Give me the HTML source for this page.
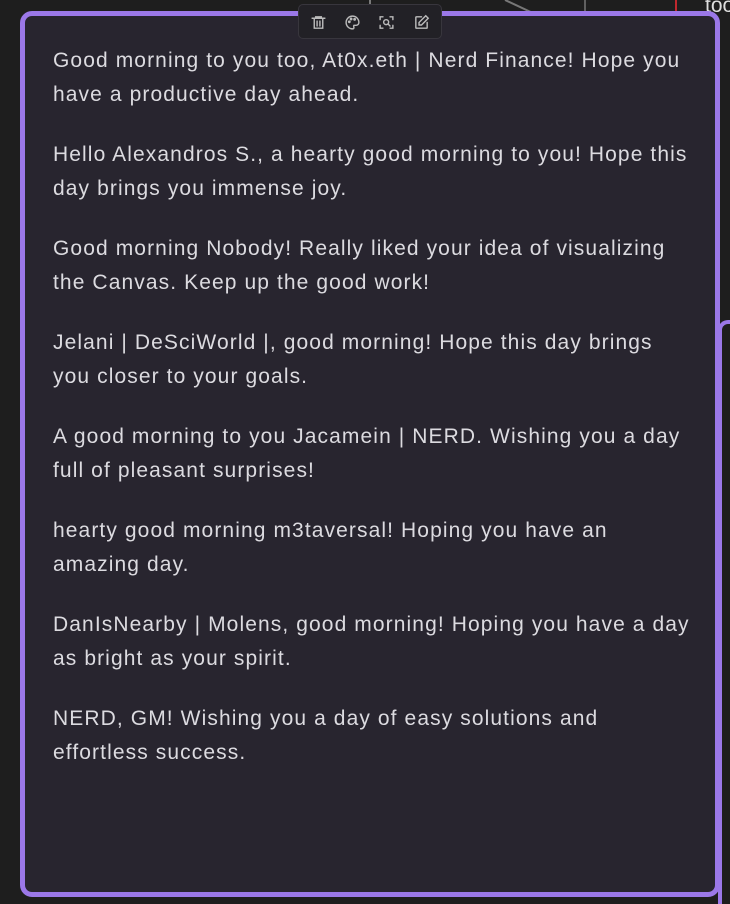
<!DOCTYPE html>
<html><head><meta charset="utf-8"><style>
html,body{margin:0;padding:0;width:730px;height:900px;overflow:hidden;background:#1e1e1e;font-family:"Liberation Sans",sans-serif;}
.card{position:absolute;left:20px;top:11px;width:690px;height:876px;border:5px solid #9b78e8;border-radius:12px;background:#28252f;}
.txt{position:absolute;left:53px;top:44px;width:670px;color:#dcdbe0;font-size:21px;line-height:34px;letter-spacing:1.1px;white-space:nowrap;}
.txt p{margin:0 0 26px 0;}
.tb{position:absolute;left:298px;top:4px;width:144px;height:35px;background:#222126;border:1px solid #38363d;border-radius:5px;box-sizing:border-box;}
.tb svg{position:absolute;top:9px;width:17px;height:17px;}
</style></head><body>
<svg style="position:absolute;left:0;top:0" width="730" height="60">
<line x1="505" y1="0" x2="535" y2="14" stroke="#777" stroke-width="2"/>
<line x1="585" y1="0" x2="585" y2="12" stroke="#777" stroke-width="1.5"/>
<line x1="676" y1="0" x2="676" y2="12" stroke="#c0282e" stroke-width="2"/>
<line x1="370" y1="0" x2="370" y2="4" stroke="#999" stroke-width="1.5"/>
</svg>
<div style="position:absolute;left:705px;top:-6px;color:#ddd;font-size:21px">too</div>
<div style="position:absolute;left:718px;top:320px;width:12px;height:580px;border-left:4px solid #9b78e8;border-top:4px solid #9b78e8;border-top-left-radius:10px;background:#1e1e1e"></div>
<div class="card"></div>
<div class="tb">
<svg style="left:11px" viewBox="0 0 24 24" fill="none" stroke="#bbb" stroke-width="2" stroke-linecap="round"><path d="M3 6h18M8 6V4h8v2M6 6v14h12V6M10 10v7M14 10v7"/></svg>
<svg style="left:45px" viewBox="0 0 24 24" fill="none" stroke="#bbb" stroke-width="2"><path d="M12 3a9 9 0 1 0 0 18c1.5 0 2-1 2-2 0-1.5-1-2 0-3h3a4 4 0 0 0 4-4c0-5-4-9-9-9z"/><circle cx="7.5" cy="11" r="1"/><circle cx="10" cy="7" r="1"/><circle cx="15" cy="7.5" r="1"/></svg>
<svg style="left:79px" viewBox="0 0 24 24" fill="none" stroke="#bbb" stroke-width="2" stroke-linecap="round"><path d="M3 8V4h4M17 4h4v4M21 16v4h-4M7 20H3v-4"/><circle cx="11.5" cy="11.5" r="3.5"/><path d="M14 14l3 3"/></svg>
<svg style="left:114px" viewBox="0 0 24 24" fill="none" stroke="#bbb" stroke-width="2" stroke-linecap="round"><path d="M12 4H5a1 1 0 0 0-1 1v14a1 1 0 0 0 1 1h14a1 1 0 0 0 1-1v-7"/><path d="M18 2.5l3.5 3.5L12 15.5H8.5V12z"/></svg>
</div>
<div class="txt">
<p>Good morning to you too, At0x.eth | Nerd Finance! Hope you<br>have a productive day ahead.</p>
<p>Hello Alexandros S., a hearty good morning to you! Hope this<br>day brings you immense joy.</p>
<p>Good morning Nobody! Really liked your idea of visualizing<br>the Canvas. Keep up the good work!</p>
<p>Jelani | DeSciWorld |, good morning! Hope this day brings<br>you closer to your goals.</p>
<p>A good morning to you Jacamein | NERD. Wishing you a day<br>full of pleasant surprises!</p>
<p>hearty good morning m3taversal! Hoping you have an<br>amazing day.</p>
<p>DanIsNearby | Molens, good morning! Hoping you have a day<br>as bright as your spirit.</p>
<p>NERD, GM! Wishing you a day of easy solutions and<br>effortless success.</p>
</div>
</body></html>
